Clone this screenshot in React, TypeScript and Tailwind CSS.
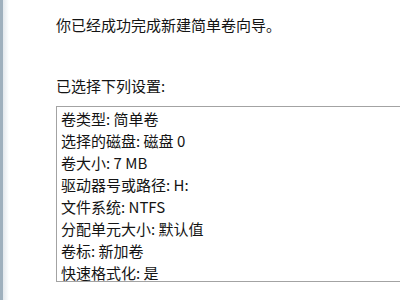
import React from 'react';

const settings = [
  '卷类型: 简单卷',
  '选择的磁盘: 磁盘 0',
  '卷大小: 7 MB',
  '驱动器号或路径: H:',
  '文件系统: NTFS',
  '分配单元大小: 默认值',
  '卷标: 新加卷',
  '快速格式化: 是',
];

export default function App() {
  return (
    <div
      className="w-[400px] h-[300px] bg-white flex overflow-hidden text-[#141414]"
      style={{ fontFamily: '"Noto Sans CJK SC", "Noto Sans", sans-serif' }}
    >
      {/* window frame edge */}
      <div className="w-[3px] h-full bg-[#9fb0bd] shrink-0" />
      <div className="w-[6px] h-full bg-gradient-to-r from-[#e3e8ec] to-white shrink-0" />

      <div className="flex flex-col pl-[47px] pt-[14px] text-[15px] leading-[21px]">
        <div>你已经成功完成新建简单卷向导。</div>
        <div className="mt-[40px]">已选择下列设置:</div>

        <div className="mt-[10px] w-[360px] h-[176px] border border-[#a3a3a3] overflow-hidden pl-[4px] pt-[1px]">
          {settings.map((s) => (
            <div key={s} className="leading-[22px] whitespace-nowrap">
              {s}
            </div>
          ))}
        </div>
      </div>
    </div>
  );
}
